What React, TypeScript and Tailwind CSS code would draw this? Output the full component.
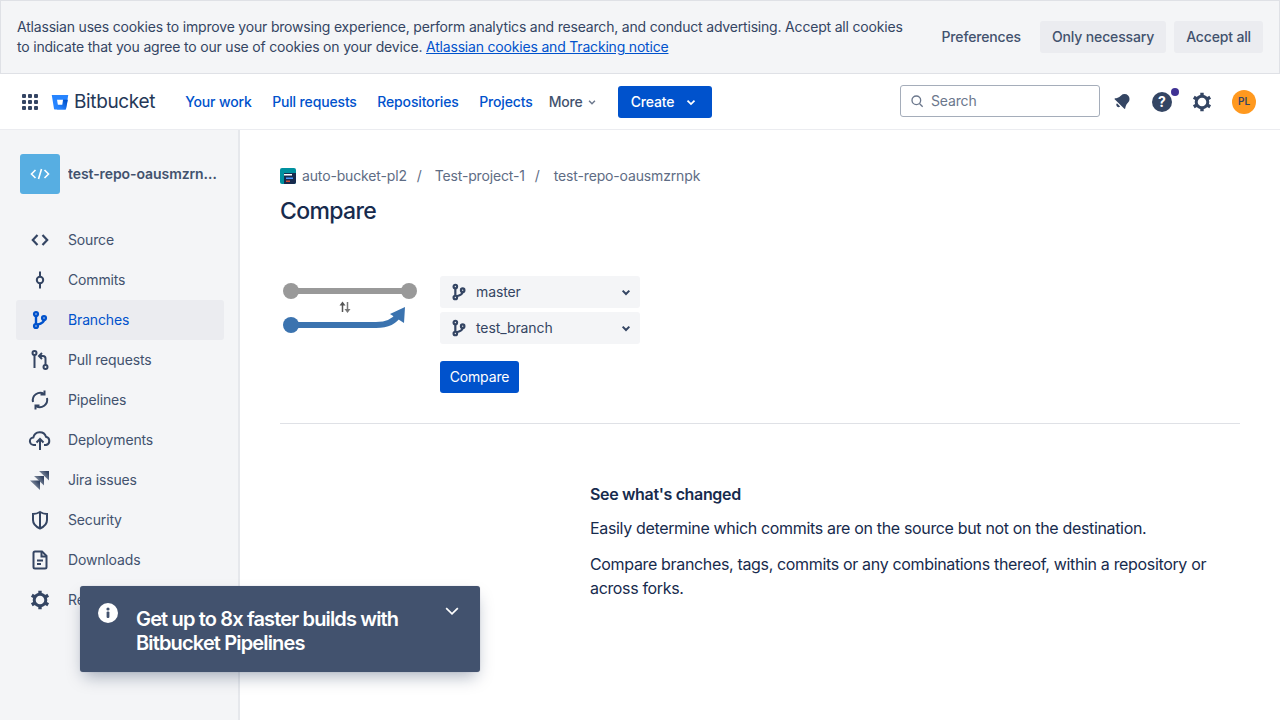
import React from 'react';

const font = { fontFamily: 'Inter, "Noto Sans", sans-serif' };

const Icon: React.FC<{ children: React.ReactNode; size?: number; className?: string }> = ({ children, size = 24, className = '' }) => (
  <svg width={size} height={size} viewBox="0 0 24 24" fill="none" className={`shrink-0 ${className}`}>
    {children}
  </svg>
);

const BranchGlyph = ({ color = '#344563', size = 20 }: { color?: string; size?: number }) => (
  <svg width={size} height={size} viewBox="0 0 24 24" fill="none" stroke={color} strokeWidth="2.4">
    <circle cx="8" cy="6" r="1.900" />
    <circle cx="8" cy="18" r="1.900" />
    <circle cx="16" cy="10" r="1.900" />
    <path d="M8 7.900v8.200M16 11.900c0 2.600-3.500 3.800-6.500 4.800" />
  </svg>
);

const navItems: { label: string; icon: React.ReactNode; active?: boolean }[] = [
  {
    label: 'Source',
    icon: (
      <Icon>
        <path d="M9.500 7 4.800 12l4.700 5M14.500 7l4.700 5-4.700 5" stroke="#344563" strokeWidth="2.200" />
      </Icon>
    ),
  },
  {
    label: 'Commits',
    icon: (
      <Icon>
        <circle cx="12" cy="12" r="3.200" stroke="#344563" strokeWidth="2" />
        <path d="M12 3.500v5.300M12 15.200v5.300" stroke="#344563" strokeWidth="2" />
      </Icon>
    ),
  },
  { label: 'Branches', active: true, icon: <BranchGlyph color="#0052cc" size={24} /> },
  {
    label: 'Pull requests',
    icon: (
      <Icon>
        <circle cx="6.500" cy="5" r="2" stroke="#344563" strokeWidth="2" />
        <circle cx="17.500" cy="19" r="2" stroke="#344563" strokeWidth="2" />
        <path d="M6.500 7v13M17.500 17v-6.500a2.500 2.500 0 0 0-2.500-2.500h-3" stroke="#344563" strokeWidth="2" />
        <path d="M14 5l-3 3 3 3" stroke="#344563" strokeWidth="2" />
      </Icon>
    ),
  },
  {
    label: 'Pipelines',
    icon: (
      <Icon>
        <path d="M5 14a7.500 7.500 0 0 1 11-8.200M19 10a7.500 7.500 0 0 1-11 8.200" stroke="#344563" strokeWidth="2" />
        <path d="M16.500 2.500v4h-4M7.500 21.500v-4h4" stroke="#344563" strokeWidth="2" />
      </Icon>
    ),
  },
  {
    label: 'Deployments',
    icon: (
      <Icon>
        <path d="M8 17H6a3.800 3.800 0 0 1-.6-7.600A6.500 6.500 0 0 1 18 8.800a4.200 4.200 0 0 1 0 8.200h-2" stroke="#344563" strokeWidth="2" />
        <path d="M12 22V12M8.500 14.500 12 11l3.500 3.500" stroke="#344563" strokeWidth="2" />
      </Icon>
    ),
  },
  {
    label: 'Jira issues',
    icon: (
      <Icon>
        <defs>
          <linearGradient id="jira" x1="1" y1="0" x2="0.1" y2="0.7">
            <stop offset="0.2" stopColor="#344563" />
            <stop offset="1" stopColor="#a5adba" />
          </linearGradient>
        </defs>
        <path d="M11 3h10v9.500z" fill="url(#jira)" />
        <path d="M6 8h10v9.500z" fill="url(#jira)" />
        <path d="M2 12.500h10V22z" fill="url(#jira)" />
      </Icon>
    ),
  },
  {
    label: 'Security',
    icon: (
      <Icon>
        <path d="M12 4c2.500 1.500 5 2 7 2v6c0 4.500-3.500 7-7 8.500C8.500 19 5 16.500 5 12V6c2 0 4.500-.5 7-2z" stroke="#344563" strokeWidth="2" />
        <path d="M12 4v16" stroke="#344563" strokeWidth="2" />
      </Icon>
    ),
  },
  {
    label: 'Downloads',
    icon: (
      <Icon>
        <path d="M14 3.500H7a1.500 1.500 0 0 0-1.500 1.500v14A1.500 1.500 0 0 0 7 20.500h10a1.500 1.500 0 0 0 1.500-1.500V8z" stroke="#344563" strokeWidth="2" />
        <path d="M13.500 4v4.500H18M9 12.500h6M9 16h4" stroke="#344563" strokeWidth="2" />
      </Icon>
    ),
  },
  {
    label: 'Repository settings',
    icon: (
      <Icon>
        <circle cx="12" cy="12" r="5.800" stroke="#344563" strokeWidth="3" />
        <path d="M12 2.800v3M12 18.200v3M3.800 7.300l2.600 1.500M17.600 15.200l2.600 1.500M3.800 16.700l2.600-1.500M17.600 8.800l2.600-1.500" stroke="#344563" strokeWidth="3.400" />
      </Icon>
    ),
  },
];

const BranchSelect = ({ name }: { name: string }) => (
  <div className="flex h-8 w-[200px] items-center rounded-[3px] bg-[#f4f5f7] pl-[8px] pr-[6px] text-sm tracking-[-0.1px] text-[#344563]">
    <BranchGlyph size={22} />
    <span className="ml-[6px] flex-1">{name}</span>
    <svg width="16" height="16" viewBox="0 0 24 24" fill="none" stroke="#344563" strokeWidth="3">
      <path d="M7 10l5 5 5-5" />
    </svg>
  </div>
);

const topLinks = ['Your work', 'Pull requests', 'Repositories', 'Projects'];

export default function App() {
  return (
    <div className="relative flex h-[720px] w-[1280px] flex-col overflow-hidden bg-white" style={font}>
      {/* cookie banner */}
      <div className="flex h-[74px] shrink-0 items-center border border-[#dfe1e6] bg-[#f4f5f7] pl-4 pr-4 text-sm">
        <div className="w-[900px] leading-5 tracking-[-0.19px] text-[#344563]">
          <p>Atlassian uses cookies to improve your browsing experience, perform analytics and research, and conduct advertising. Accept all cookies</p>
          <p>
            to indicate that you agree to our use of cookies on your device.{' '}
            <a className="text-[#0052cc] underline">Atlassian cookies and Tracking notice</a>
          </p>
        </div>
        <div className="ml-auto flex items-center font-medium tracking-[-0.15px] text-[#42526e]">
          <span className="mr-[7px] px-3">Preferences</span>
          <span className="flex h-8 items-center rounded-[3px] bg-[#ebecf0] px-3">Only necessary</span>
          <span className="ml-2 flex h-8 items-center rounded-[3px] bg-[#ebecf0] px-3">Accept all</span>
        </div>
      </div>

      {/* top nav */}
      <header className="flex h-[56px] shrink-0 items-center border-b border-[#ebecf0] pl-[22px] pr-6">
        <div className="grid grid-cols-3 gap-[2px]">
          {Array.from({ length: 9 }).map((_, i) => (
            <span key={i} className="h-1 w-1 rounded-[1px] bg-[#344563]" />
          ))}
        </div>
        <svg width="18" height="18" viewBox="0 0 24 24" className="ml-[13px]">
          <defs>
            <linearGradient id="bb" x1="1" y1="0.3" x2="0.4" y2="1">
              <stop offset="0" stopColor="#0052cc" />
              <stop offset="1" stopColor="#2684ff" />
            </linearGradient>
          </defs>
          <path d="M1 2.500h22l-3 18.500a1 1 0 0 1-1 1H5a1 1 0 0 1-1-1z" fill="#2684ff" />
          <path d="M16 9h6.500L20 21a1 1 0 0 1-1 1H8l1.200-6.500H15z" fill="url(#bb)" />
          <path d="M8 9h8l-1 6.500H9.200z" fill="#fff" />
        </svg>
        <span className="ml-[5px] mt-[1px] text-[19px] font-normal tracking-[-0.35px] text-[#253858]">Bitbucket</span>
        <nav className="ml-[30px] flex items-center gap-[20.5px] text-sm font-medium tracking-[-0.15px] text-[#0052cc]">
          {topLinks.map((link) => (
            <a key={link}>{link}</a>
          ))}
        </nav>
        <span className="ml-4 flex items-center text-sm font-medium tracking-[-0.15px] text-[#42526e]">
          More
          <svg width="14" height="14" viewBox="0 0 24 24" fill="none" stroke="#6b778c" strokeWidth="2.500" className="ml-[2px]">
            <path d="M7 10l5 5 5-5" />
          </svg>
        </span>
        <button className="ml-[19px] flex h-8 w-[94px] items-center justify-between rounded-[3px] bg-[#0052cc] pl-[13px] pr-[14px] text-sm font-medium tracking-[-0.15px] text-white">
          Create
          <svg width="14" height="14" viewBox="0 0 24 24" fill="none" stroke="#fff" strokeWidth="3">
            <path d="M6 9.500l6 6 6-6" />
          </svg>
        </button>
        <div className="mb-[1px] ml-auto flex h-8 w-[200px] items-center rounded-[3px] border border-[#a5adba] pl-2 text-sm tracking-[-0.15px] text-[#6b778c]">
          <svg width="16" height="16" viewBox="0 0 24 24" fill="none" stroke="#6b778c" strokeWidth="2">
            <circle cx="11" cy="11" r="6.500" />
            <path d="M16 16l4.500 4.500" />
          </svg>
          <span className="ml-[6px]">Search</span>
        </div>
        <svg width="24" height="24" viewBox="0 0 24 24" className="ml-[10px]">
          <g transform="translate(1 -1.500) rotate(45 12 12) translate(1.200 1.200) scale(0.9)">
            <path d="M12 4a5.500 5.500 0 0 0-5.500 5.500c0 4-1.500 5.500-2.500 7v1h16v-1c-1-1.500-2.500-3-2.500-7A5.500 5.500 0 0 0 12 4z" fill="#344563" />
            <path d="M9.500 19a2.500 2.500 0 0 0 5 0z" fill="#344563" />
          </g>
        </svg>
        <span className="relative ml-4 flex h-6 w-6 items-center justify-center">
          <span className="flex h-5 w-5 items-center justify-center rounded-full bg-[#344563] text-[14px] font-bold leading-none text-white">?</span>
          <span className="absolute right-[-5px] top-[-2px] h-2 w-2 rounded-full bg-[#403294]" />
        </span>
        <svg width="24" height="24" viewBox="0 0 24 24" fill="none" className="ml-4">
          <circle cx="12" cy="12" r="5.800" stroke="#344563" strokeWidth="3" />
          <path d="M12 2.800v3M12 18.200v3M3.800 7.300l2.600 1.500M17.600 15.200l2.600 1.500M3.800 16.700l2.600-1.500M17.600 8.800l2.600-1.500" stroke="#344563" strokeWidth="3.400" />
        </svg>
        <span className="ml-[18px] flex h-6 w-6 items-center justify-center rounded-full bg-[#ff991f] text-[10px] font-semibold text-[#344563]">PL</span>
      </header>

      <div className="flex min-h-0 flex-1">
        {/* sidebar */}
        <aside className="w-[240px] shrink-0 border-r-2 border-[#e6e8ec] bg-[#f4f5f7] pl-4 pr-[14px]">
          <div className="mt-6 flex h-10 items-center pl-1">
            <span className="flex h-10 w-10 items-center justify-center rounded-[3px] bg-[#57aee2]">
              <svg width="24" height="24" viewBox="0 0 24 24" fill="none" stroke="#fff" strokeWidth="1.600">
                <path d="M7.500 8 3.500 12l4 4M16.500 8l4 4-4 4M13.500 7l-3 10" />
              </svg>
            </span>
            <span className="ml-2 w-[150px] truncate text-sm font-semibold tracking-[-0.08px] text-[#42526e]">test-repo-oausmzrnpk</span>
          </div>
          <nav className="mt-[26px] text-sm tracking-[-0.15px]">
            {navItems.map((item) => (
              <div
                key={item.label}
                className={`flex h-10 items-center rounded-[3px] pl-3 ${item.active ? 'bg-[#ebecf0] text-[#0052cc]' : 'text-[#42526e]'}`}
              >
                <span className="flex w-6 justify-center">{item.icon}</span>
                <span className="ml-4">{item.label}</span>
              </div>
            ))}
          </nav>
        </aside>

        {/* main */}
        <main className="flex-1 px-10 pt-9">
          <div className="flex h-5 items-center text-sm tracking-[-0.15px] text-[#5e6c84]">
            <svg width="16" height="16" viewBox="0 0 16 16" className="mr-[6px]">
              <rect width="16" height="16" rx="2" fill="#00919f" />
              <path d="M4 5h12v9a2 2 0 0 1-2 2H4z" fill="#172b4d" />
              <rect x="4" y="6" width="8" height="1.500" fill="#fff" />
              <rect x="6" y="9.500" width="7" height="1.500" fill="#4c9aff" />
              <rect x="6" y="12.500" width="4" height="1.500" fill="#ff5630" opacity="0.8" />
            </svg>
            <span>auto-bucket-pl2</span>
            <span className="ml-[10px] mr-[13px]">/</span>
            <span>Test-project-1</span>
            <span className="ml-[10px] mr-[14px]">/</span>
            <span>test-repo-oausmzrnpk</span>
          </div>
          <h1 className="mt-[11px] text-[23px] font-[550] leading-7 tracking-[-0.65px] text-[#172b4d]">Compare</h1>

          <div className="mt-[51px] flex">
            <svg width="160" height="64" viewBox="0 0 160 64" className="shrink-0">
              <path d="M11 15h118" stroke="#999" strokeWidth="6" />
              <circle cx="11" cy="15" r="8" fill="#999" />
              <circle cx="129" cy="15" r="8" fill="#999" />
              <circle cx="11" cy="49" r="8" fill="#3b73af" />
              <path d="M11 49h85c12 0 19-4 23-11" stroke="#3b73af" strokeWidth="6" fill="none" />
              <path d="M125 31l-1 16-14-9z" fill="#3b73af" />
              <path d="M62.500 36V28" stroke="#555" strokeWidth="1.500" />
              <path d="M59.500 29.500l3-4 3 4z" fill="#555" />
              <path d="M67.500 26v8" stroke="#777" strokeWidth="1.500" />
              <path d="M64.500 33l3 4 3-4z" fill="#777" />
            </svg>
            <div className="flex flex-col gap-1">
              <BranchSelect name="master" />
              <BranchSelect name="test_branch" />
              <button className="mt-[13px] h-8 w-[79px] rounded-[3px] bg-[#0052cc] text-sm tracking-[-0.15px] text-white">Compare</button>
            </div>
          </div>

          <div className="mt-[30px] border-t border-[#dfe1e6]" />

          <div className="ml-[310px] mt-[58px] text-base leading-6 tracking-[-0.34px] text-[#172b4d]">
            <h2 className="font-semibold">See what's changed</h2>
            <p className="mt-[10px]">Easily determine which commits are on the source but not on the destination.</p>
            <p className="mt-3">Compare branches, tags, commits or any combinations thereof, within a repository or across forks.</p>
          </div>
        </main>
      </div>

      {/* pipelines flag */}
      <div className="absolute left-20 top-[586px] flex h-[86px] w-[400px] rounded-[3px] bg-[#42526e] pl-4 pr-[18px] pt-[16px] text-white shadow-[0_8px_16px_-4px_rgba(9,30,66,0.35),0_0_1px_rgba(9,30,66,0.31)]">
        <svg width="24" height="24" viewBox="0 0 24 24" className="mt-[-1px] shrink-0">
          <circle cx="12" cy="12" r="10" fill="#fff" />
          <rect x="10.600" y="10.500" width="2.800" height="6.500" rx="1" fill="#42526e" />
          <circle cx="12" cy="8" r="1.600" fill="#42526e" />
        </svg>
        <p className="ml-4 mt-[5px] w-[300px] text-xl font-semibold leading-6 tracking-[-0.85px]">Get up to 8x faster builds with Bitbucket Pipelines</p>
        <svg width="20" height="20" viewBox="0 0 24 24" fill="none" stroke="#fff" strokeWidth="2" className="ml-auto mt-[-1px]">
          <path d="M5 8.500l7 7 7-7" />
        </svg>
      </div>
    </div>
  );
}
